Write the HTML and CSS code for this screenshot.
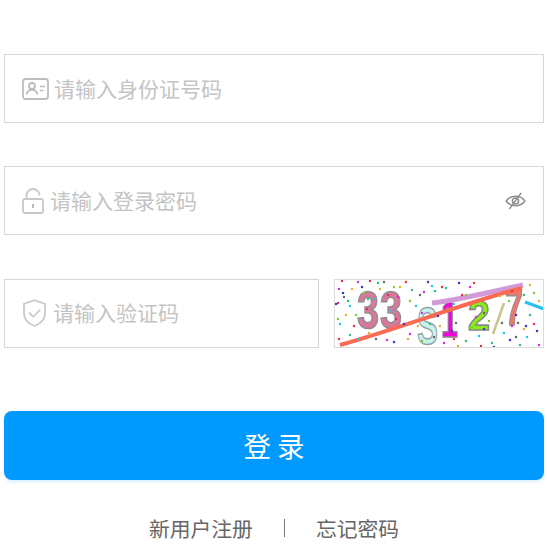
FILE: index.html
```html
<!DOCTYPE html>
<html lang="zh-CN">
<head>
<meta charset="utf-8">
<title>登录</title>
<link rel="stylesheet" href="styles.css">
</head>
<body>
<form class="login">
  <label class="field">
    <svg class="icon icon-card" viewBox="0 0 27 22" fill="none" stroke="#bdbdbd" stroke-width="1.8">
      <rect x="1" y="1" width="25" height="20" rx="2.5"/>
      <circle cx="10" cy="8" r="3"/>
      <path d="M4.5 16.5c.6-3.2 2.6-4.6 5.500-4.600s4.900 1.400 5.500 4.600"/>
      <path d="M18 8.500h5M18 12.500h3.500" stroke-width="1.5"/>
    </svg>
    <input class="field-input" type="text" placeholder="请输入身份证号码">
  </label>

  <label class="field">
    <svg class="icon icon-lock" viewBox="0 0 22 26" fill="none" stroke="#c8c8c8" stroke-width="1.8">
      <rect x="1" y="11" width="20" height="14" rx="2"/>
      <path d="M4.500 11V7.500a6.500 6.500 0 0 1 13 0"/>
      <path d="M11 16v4" stroke="#bbb" stroke-width="2"/>
    </svg>
    <input class="field-input" type="text" placeholder="请输入登录密码">
    <svg class="icon-eye" viewBox="0 0 22 20" fill="none" stroke="#8f8f8f" stroke-width="1.6">
      <path d="M1.200 10C3.600 6.600 7 5 11 5s7.400 1.600 9.800 5c-2.400 3.400-5.800 5-9.800 5s-7.400-1.600-9.800-5z"/>
      <circle cx="11" cy="10" r="3.200"/>
      <path d="M17 1.500 4.500 18.500"/>
    </svg>
  </label>

  <div class="code-row">
    <label class="field field-code">
      <svg class="icon icon-shield" viewBox="0 0 23 28" fill="none" stroke="#cbcbcb" stroke-width="1.8">
        <path d="M11.500 1.200 22 5v9.500c0 5.800-4.400 10.200-10.500 12.500C5.400 24.700 1 20.300 1 14.500V5z"/>
        <path d="M6 13.500l4.300 4.300 7-7.300"/>
      </svg>
      <input class="field-input" type="text" placeholder="请输入验证码">
    </label>
    <svg class="captcha" viewBox="0 0 210 69" role="img" aria-label="验证码">
      <defs><filter id="soft"><feGaussianBlur stdDeviation="0.65"/></filter></defs>
      <rect width="210" height="69" fill="#fff"/>
      <g filter="url(#soft)">
        <text class="cap-digit" x="23" y="49" font-size="52" textLength="22" lengthAdjust="spacingAndGlyphs" fill="#d9789a" stroke="#8e8e8e">3</text>
        <text class="cap-digit" x="46" y="49" font-size="52" textLength="22" lengthAdjust="spacingAndGlyphs" fill="#d9789a" stroke="#8e8e8e">3</text>
        <text class="cap-digit" x="83" y="65" font-size="52" textLength="21" lengthAdjust="spacingAndGlyphs" fill="#c8f0ee" stroke="#8fa5a5">S</text>
        <text class="cap-digit" x="107" y="58" font-size="52" textLength="17" lengthAdjust="spacingAndGlyphs" fill="#f400e0" stroke="#8a8a8a">1</text>
        <text class="cap-digit" x="134" y="51" font-size="42" textLength="22" lengthAdjust="spacingAndGlyphs" fill="#88ee10" stroke="#8a8a8a">2</text>
        <text class="cap-digit" x="171" y="46" font-size="50" textLength="18" lengthAdjust="spacingAndGlyphs" fill="#ee7a6a" stroke="#a08a8a">7</text>
        <path d="M98 24C130 20 160 12 189 6" stroke="#d39ad8" stroke-width="5" fill="none"/>
        <path d="M6 66C70 48 130 24 188 9" stroke="#fb6a52" stroke-width="4" fill="none"/>
        <path d="M159 55 170 24" stroke="#c9c48e" stroke-width="2.500" fill="none"/>
        <path d="M191 23 210 30" stroke="#2cc0f4" stroke-width="3" fill="none"/>
        <g fill="none" stroke-width="2.500" stroke-linecap="round">
          <path stroke="#e8344a" d="M8 2h0M54 16h0M72 3h0M108 8h0M140 4h0M178 12h0M200 45h0M20 47h0M5 60h0M120 60h0M147 67h0M4 24h0M36 2h0M128 16h0M62 40h0M33 30h0"/>
          <path stroke="#3a3ad0" d="M2 25h0M9 14h0M70 45h0M94 3h0M125 4h0M150 50h0M182 36h0M203 52h0M118 52h0M176 61h0M28 8h0M160 68h0M60 63h0M104 37h0M192 47h0"/>
          <path stroke="#2ec27e" d="M14 22h0M34 20h0M78 11h0M44 4h0M101 12h0M112 9h0M158 64h0M196 36h0M132 62h0M186 66h0M16 56h0M190 16h0M96 45h0"/>
          <path stroke="#d733e0" d="M5 10h0M24 3h0M64 18h0M88 34h0M90 13h0M142 38h0M178 47h0M205 66h0M53 61h0M136 8h0M110 64h0M76 55h0"/>
          <path stroke="#22c5e8" d="M6 45h0M16 27h0M40 20h0M82 27h0M98 7h0M145 57h0M170 54h0M193 58h0M24 60h0M120 25h0M56 32h0"/>
          <path stroke="#e6b030" d="M18 10h0M46 10h0M66 8h0M12 36h0M84 47h0M106 47h0M196 6h0M205 22h0M124 67h0M166 17h0M35 54h0M74 60h0M190 50h0"/>
          <path stroke="#7bcf2e" d="M30 14h0M60 8h0M76 22h0M4 40h0M132 16h0M175 22h0M200 14h0M155 42h0M138 48h0M22 36h0M88 62h0"/>
          <path stroke="#6b6b6b" d="M10 18h0M50 3h0M86 16h0M122 44h0M168 44h0M184 44h0M182 58h0M150 34h0M42 60h0M100 58h0"/>
        </g>
      </g>
    </svg>
  </div>

  <button class="submit" type="button">登 录</button>

  <nav class="links">
    <a class="link" href="#">新用户注册</a>
    <span class="divider"></span>
    <a class="link" href="#">忘记密码</a>
  </nav>
</form>
</body>
</html>
```

FILE: styles.css
```css
* {
  box-sizing: border-box;
}

html,
body {
  margin: 0;
  background: #fff;
}

body {
  font-family: "Noto Sans CJK SC", "Liberation Sans", sans-serif;
  overflow: hidden;
}

.login {
  display: flex;
  flex-direction: column;
  gap: 43.4px;
  width: 540px;
  margin-left: 4px;
  padding-top: 54px;
}

.field {
  display: flex;
  align-items: center;
  height: 69px;
  padding: 0 17px;
  border: 1px solid #d6d6d6;
  background: #fff;
}

.field-code {
  flex: 1;
  min-width: 0;
}

.field-input {
  flex: 1;
  min-width: 0;
  padding: 0 0 2px;
  border: 0;
  outline: 0;
  background: transparent;
  font: inherit;
  font-size: 21px;
  color: #666;
}

.field-input::placeholder {
  color: #c4c4c4;
  opacity: 1;
}

.icon {
  flex: none;
}

.icon-card {
  width: 27px;
  height: 22px;
  margin-right: 5px;
}

.icon-lock {
  width: 22px;
  height: 26px;
  margin-right: 6px;
}

.icon-shield {
  width: 23px;
  height: 28px;
  margin-left: 1px;
  margin-right: 7px;
}

.icon-eye {
  flex: none;
  width: 21px;
  height: 20px;
}

.code-row {
  display: flex;
  gap: 15px;
}

.captcha {
  flex: none;
  display: block;
  width: 210px;
  height: 69px;
  outline: 1px solid #dcdcdc;
  outline-offset: -1px;
}

.cap-digit {
  font-family: "Liberation Sans", sans-serif;
  font-weight: 700;
  stroke-width: 1.6;
}

.submit {
  height: 69px;
  margin-top: 19.8px;
  border: 0;
  border-radius: 8px;
  background: #0099ff;
  box-shadow: 0 2px 3px rgba(0, 153, 255, 0.14);
  color: #fff;
  font: inherit;
  font-size: 27.5px;
}

.links {
  display: flex;
  align-items: center;
  justify-content: center;
  gap: 31px;
  margin-top: -10.400px;
}

.link {
  color: #666;
  font-size: 20.8px;
  line-height: 30px;
  text-decoration: none;
}

.divider {
  width: 1px;
  height: 18px;
  background: #777;
}
```
